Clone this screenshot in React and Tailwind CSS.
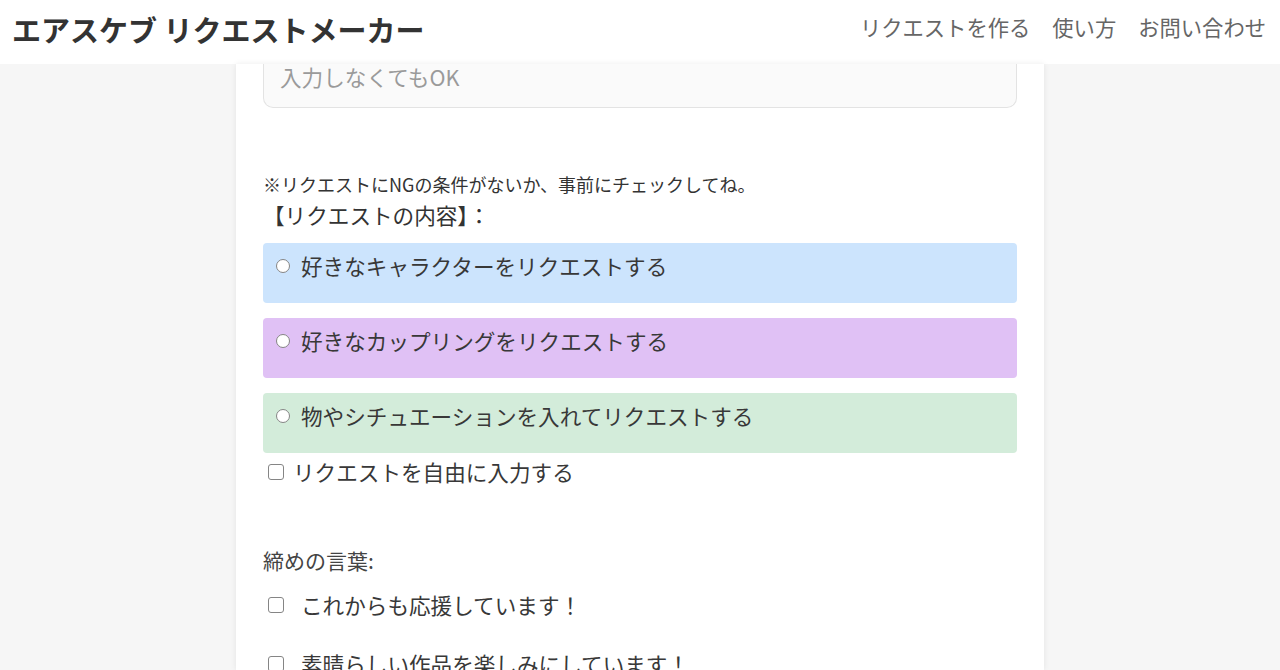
import React from "react";

const font = { fontFamily: '"Noto Sans CJK JP", "Noto Sans", sans-serif' };

function Radio() {
  return (
    <span className="inline-block w-[14px] h-[14px] rounded-full border border-[#858585] bg-white shrink-0" />
  );
}

function Check() {
  return (
    <span className="inline-block w-[16px] h-[16px] rounded-[3px] border border-[#858585] bg-white shrink-0" />
  );
}

function Option({ bg, children }) {
  return (
    <div className={`h-[60px] rounded-[4px] ${bg} pl-[13px] pt-[9px]`}>
      <div className="flex items-center gap-[11px] h-[28px] leading-[28px] text-[21.6px] text-[#383838]">
        <Radio />
        <span>{children}</span>
      </div>
    </div>
  );
}

export default function App() {
  return (
    <div className="w-[1280px] h-[670px] overflow-hidden bg-[#f6f6f6]" style={font}>
      <header className="h-[64px] bg-white flex items-center justify-between pl-[12px] pr-[14px]">
        <div className="text-[29px] font-bold text-[#333] leading-none -mt-[6px]">
          エアスケブ リクエストメーカー
        </div>
        <nav className="flex gap-[22px] text-[21.3px] text-[#666] leading-[28px] -mt-[10px]">
          <span>リクエストを作る</span>
          <span>使い方</span>
          <span>お問い合わせ</span>
        </nav>
      </header>
      <main className="flex justify-center">
        <div className="w-[808px] h-[606px] bg-white shadow-[0_0_6px_rgba(0,0,0,0.08)] px-[27px]">
          <div className="h-[44px] border border-t-0 border-[#e3e3e3] bg-[#fafafa] rounded-b-[10px] pl-[16px] leading-[26px] text-[21.6px] text-[#9a9a9a]">
            入力しなくてもOK
          </div>
          <div className="mt-[64px] leading-[24px] text-[18px] text-[#333]">
            ※リクエストにNGの条件がないか、事前にチェックしてね。
          </div>
          <div className="mt-[5px] leading-[28px] text-[21.6px] text-[#333]">
            【リクエストの内容】：
          </div>
          <div className="mt-[14px] flex flex-col gap-[15px]">
            <Option bg="bg-[#cce4fd]">好きなキャラクターをリクエストする</Option>
            <Option bg="bg-[#e0c1f5]">好きなカップリングをリクエストする</Option>
            <Option bg="bg-[#d3ecda]">物やシチュエーションを入れてリクエストする</Option>
          </div>
          <div className="mt-[5px] flex items-center gap-[9px] pl-[5px] h-[28px] leading-[28px] text-[21.6px] text-[#383838]">
            <Check />
            <span>リクエストを自由に入力する</span>
          </div>
          <div className="mt-[60px] leading-[28px] text-[21px] text-[#444]">締めの言葉:</div>
          <div className="mt-[17px] flex items-center gap-[17px] pl-[5px] h-[28px] leading-[28px] text-[21.6px] text-[#383838]">
            <Check />
            <span>これからも応援しています！</span>
          </div>
          <div className="mt-[31px] flex items-center gap-[17px] pl-[5px] h-[28px] leading-[28px] text-[21.6px] text-[#383838]">
            <Check />
            <span>素晴らしい作品を楽しみにしています！</span>
          </div>
        </div>
      </main>
    </div>
  );
}
